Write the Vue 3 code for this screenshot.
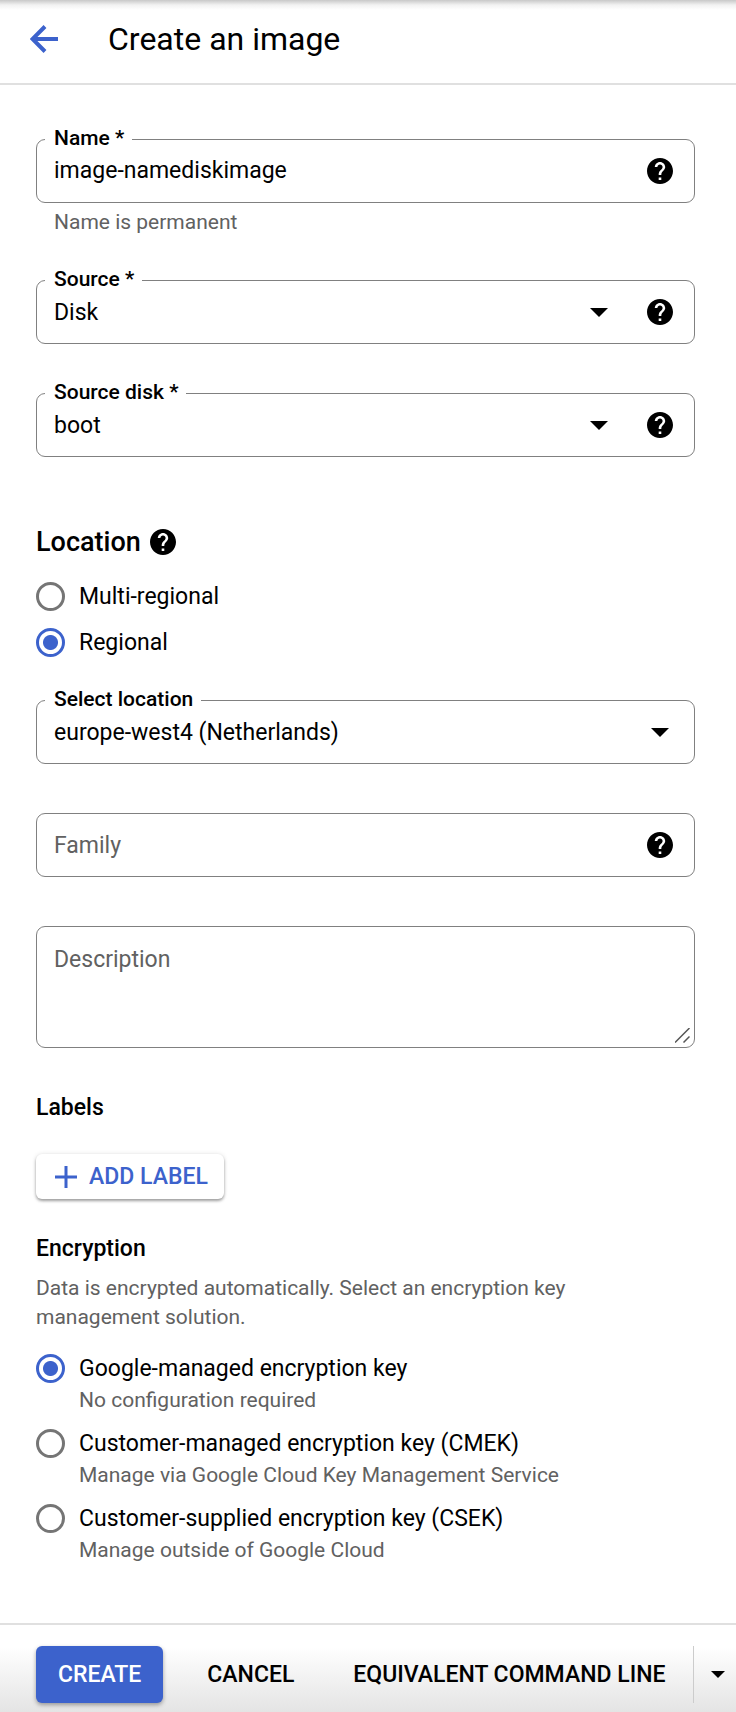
<script setup>
import { ref } from 'vue'

const name = ref('image-namediskimage')
const source = ref('Disk')
const sourceDisk = ref('boot')
const scope = ref('regional')
const location = ref('europe-west4 (Netherlands)')
const family = ref('')
const description = ref('')
const encryption = ref('google')

const scopes = [
  { id: 'multi', title: 'Multi-regional' },
  { id: 'regional', title: 'Regional' },
]
const keys = [
  { id: 'google', title: 'Google-managed encryption key', note: 'No configuration required' },
  { id: 'cmek', title: 'Customer-managed encryption key (CMEK)', note: 'Manage via Google Cloud Key Management Service' },
  { id: 'csek', title: 'Customer-supplied encryption key (CSEK)', note: 'Manage outside of Google Cloud' },
]
const helpPath =
  'M12 2C6.48 2 2 6.48 2 12s4.48 10 10 10 10-4.48 10-10S17.52 2 12 2zm1 17h-2v-2h2v2zm2.07-7.75l-.9.92C13.45 12.9 13 13.5 13 15h-2v-.5c0-1.1.45-2.1 1.17-2.83l1.24-1.26c.37-.36.59-.86.59-1.41 0-1.1-.9-2-2-2s-2 .9-2 2H8c0-2.21 1.79-4 4-4s4 1.79 4 4c0 .88-.36 1.68-.93 2.25z'
</script>

<template>
  <div class="page">
    <header class="top">
      <button class="icon-btn" type="button" aria-label="Back">
        <svg class="back" viewBox="0 0 28 28"><path d="M28 14H2.5M15 1.5L2.500 14L15 26.500" /></svg>
      </button>
      <h1>Create an image</h1>
    </header>

    <form class="form" @submit.prevent>
      <fieldset class="field">
        <legend><label for="name">Name *</label></legend>
        <div class="row">
          <input id="name" v-model="name" class="control" type="text" />
          <button class="icon-btn" type="button" aria-label="Help: name">
            <svg class="help" viewBox="2 2 20 20"><path :d="helpPath" /></svg>
          </button>
        </div>
      </fieldset>
      <p class="hint">Name is permanent</p>

      <fieldset class="field after-hint">
        <legend><label for="source">Source *</label></legend>
        <div class="row">
          <div class="picker">
            <select id="source" v-model="source" class="control"><option>Disk</option></select>
            <svg class="caret" viewBox="0 0 18 9"><path d="M0 0h18L9 9z" /></svg>
          </div>
          <button class="icon-btn" type="button" aria-label="Help: source">
            <svg class="help" viewBox="2 2 20 20"><path :d="helpPath" /></svg>
          </button>
        </div>
      </fieldset>

      <fieldset class="field after-field">
        <legend><label for="disk">Source disk *</label></legend>
        <div class="row">
          <div class="picker">
            <select id="disk" v-model="sourceDisk" class="control"><option>boot</option></select>
            <svg class="caret" viewBox="0 0 18 9"><path d="M0 0h18L9 9z" /></svg>
          </div>
          <button class="icon-btn" type="button" aria-label="Help: source disk">
            <svg class="help" viewBox="2 2 20 20"><path :d="helpPath" /></svg>
          </button>
        </div>
      </fieldset>

      <div class="location-head">
        <h2 id="location-title">Location</h2>
        <button class="icon-btn" type="button" aria-label="Help: location">
          <svg class="help" viewBox="2 2 20 20"><path :d="helpPath" /></svg>
        </button>
      </div>
      <div class="scopes" role="radiogroup" aria-labelledby="location-title">
        <label v-for="s in scopes" :key="s.id" class="scope">
          <input v-model="scope" class="radio" type="radio" name="scope" :value="s.id" />
          <span class="scope-title">{{ s.title }}</span>
        </label>
      </div>

      <fieldset class="field after-scopes">
        <legend><label for="location">Select location</label></legend>
        <div class="row">
          <div class="picker wide">
            <select id="location" v-model="location" class="control">
              <option>europe-west4 (Netherlands)</option>
            </select>
            <svg class="caret" viewBox="0 0 18 9"><path d="M0 0h18L9 9z" /></svg>
          </div>
        </div>
      </fieldset>

      <div class="box">
        <input v-model="family" class="control" type="text" placeholder="Family" aria-label="Family" />
        <button class="icon-btn" type="button" aria-label="Help: family">
          <svg class="help" viewBox="2 2 20 20"><path :d="helpPath" /></svg>
        </button>
      </div>

      <div class="box area">
        <textarea v-model="description" class="control" placeholder="Description" aria-label="Description"></textarea>
        <svg class="grip" viewBox="0 0 15 15"><path d="M0 14.500L14.500 0M8.500 14.500L14.500 8.500" /></svg>
      </div>

      <h3 class="labels-title">Labels</h3>
      <button class="add" type="button">
        <svg class="plus" viewBox="0 0 22 22"><path d="M11 0v22M0 11h22" /></svg>
        <span>ADD LABEL</span>
      </button>

      <h3 id="encryption-title" class="encryption-title">Encryption</h3>
      <p class="intro">Data is encrypted automatically. Select an encryption key management solution.</p>
      <div class="keys" role="radiogroup" aria-labelledby="encryption-title">
        <label v-for="k in keys" :key="k.id" class="key">
          <input v-model="encryption" class="radio" type="radio" name="encryption" :value="k.id" />
          <span class="key-text">
            <span class="key-title">{{ k.title }}</span>
            <span class="key-note">{{ k.note }}</span>
          </span>
        </label>
      </div>
    </form>

    <footer class="actions">
      <button class="create" type="button">CREATE</button>
      <button class="plain" type="button">CANCEL</button>
      <button class="plain" type="button">EQUIVALENT COMMAND LINE</button>
      <button class="more" type="button" aria-label="More formats">
        <svg class="caret-small" viewBox="0 0 14 7"><path d="M0 0h14L7 7z" /></svg>
      </button>
    </footer>
  </div>
</template>

<style>
body {
  background: #fff;
}
</style>

<style scoped>
.page {
  font-family: Roboto, "Liberation Sans", sans-serif;
  font-size: 23px;
  line-height: 30px;
  color: #000;
}
.page *,
.page {
  box-sizing: border-box;
}
h1,
h2,
h3,
p {
  margin: 0;
  font-weight: 500;
}
button,
input,
select,
textarea {
  font: inherit;
  color: inherit;
  margin: 0;
  padding: 0;
  border: 0;
  background: none;
}
svg {
  display: block;
  flex: none;
}
.icon-btn {
  flex: none;
}
.top {
  display: flex;
  align-items: center;
  gap: 50px;
  height: 85px;
  padding: 0 30px 6px;
  border-bottom: 2px solid #e0e0e0;
  background: linear-gradient(#c8c8c8, #f2f2f2 5px, #fff 10px);
}
.back {
  width: 28px;
  height: 28px;
  fill: none;
  stroke: #3c62cc;
  stroke-width: 4;
}
h1 {
  font-size: 32px;
  line-height: 40px;
  font-weight: 400;
}
.form {
  padding: 41px 41px 56px 36px;
}
.field {
  min-width: 0;
  margin: 0;
  padding: 0 8px 12px;
  border: 1px solid #808080;
  border-radius: 9px;
}
legend {
  padding: 0 8px 2px 9px;
  font-size: 21px;
  line-height: 24px;
  font-weight: 500;
}
legend label {
  display: block;
}
.row {
  display: flex;
  align-items: center;
  height: 38px;
  padding: 0 13px 0 9px;
}
.control {
  flex: 1;
  min-width: 0;
  width: 100%;
  height: 30px;
  outline: none;
  appearance: none;
}
select.control {
  padding-top: 1px;
}
.box .control {
  padding-top: 2px;
}
.picker {
  position: relative;
  flex: 1;
  display: flex;
  align-items: center;
  margin-right: 39px;
}
.picker.wide {
  margin-right: 4px;
}
.caret {
  position: absolute;
  right: 0;
  width: 18px;
  height: 9px;
  pointer-events: none;
}
.help {
  width: 26px;
  height: 26px;
}
.hint {
  margin: 5px 0 0 18px;
  font-size: 21px;
  line-height: 28px;
  font-weight: 400;
  color: #616161;
}
.after-hint {
  margin-top: 31px;
}
.after-field {
  margin-top: 36px;
}
.location-head {
  display: flex;
  align-items: center;
  gap: 9px;
  margin-top: 69px;
}
h2 {
  font-size: 27px;
  line-height: 32px;
}
.scopes {
  margin-top: 15px;
}
.scope {
  display: flex;
  align-items: center;
  gap: 14px;
  height: 46px;
}
.scope-title {
  padding-top: 2px;
}
.radio {
  flex: none;
  width: 29px;
  height: 29px;
  border: 3px solid #757575;
  border-radius: 50%;
  appearance: none;
}
.radio:checked {
  border-color: #3c62cc;
  background: radial-gradient(circle, #3c62cc 7px, transparent 8px);
}
.after-scopes {
  margin-top: 22px;
}
.box {
  position: relative;
  display: flex;
  align-items: center;
  height: 64px;
  margin-top: 49px;
  padding: 0 21px 0 17px;
  border: 1px solid #808080;
  border-radius: 9px;
}
.control::placeholder {
  color: #616161;
  opacity: 1;
}
.area {
  height: 122px;
  padding: 16px 17px;
}
.area .control {
  height: 100%;
  resize: none;
}
.grip {
  position: absolute;
  right: 4px;
  bottom: 4px;
  width: 15px;
  height: 15px;
  fill: none;
  stroke: #555;
  stroke-width: 1.500;
}
h3 {
  font-size: 23px;
  line-height: 28px;
}
.labels-title {
  margin-top: 46px;
}
.add {
  display: flex;
  align-items: center;
  gap: 12px;
  height: 45px;
  margin-top: 32px;
  padding: 0 16px 0 19px;
  border-radius: 6px;
  background: #fff;
  color: #3c62cc;
  font-weight: 500;
  box-shadow: 0 2px 3px rgba(0, 0, 0, 0.35), 0 0 5px rgba(0, 0, 0, 0.1);
}
.plus {
  width: 22px;
  height: 22px;
  fill: none;
  stroke: #3c62cc;
  stroke-width: 3;
}
.encryption-title {
  margin-top: 36px;
}
.intro {
  max-width: 600px;
  margin-top: 11px;
  font-size: 21px;
  line-height: 29px;
  font-weight: 400;
  color: #616161;
}
.keys {
  display: flex;
  flex-direction: column;
  gap: 12px;
  margin-top: 22px;
}
.key {
  display: flex;
  align-items: flex-start;
  gap: 14px;
}
.key-text {
  display: flex;
  flex-direction: column;
}
.key-note {
  font-size: 21px;
  line-height: 33px;
  color: #616161;
}
.actions {
  display: flex;
  align-items: center;
  height: 89px;
  padding: 12px 0 0 36px;
  border-top: 2px solid #e0e0e0;
  background: linear-gradient(#fff 25%, #e4e4e4);
  font-weight: 500;
  white-space: nowrap;
}
.create {
  height: 57px;
  padding: 0 22px;
  border-radius: 6px;
  background: #3c62cc;
  color: #fff;
  box-shadow: 0 2px 4px rgba(0, 0, 0, 0.35);
}
.plain {
  height: 57px;
  margin-left: 44px;
}
.plain + .plain {
  margin-left: 59px;
}
.more {
  display: flex;
  align-items: center;
  justify-content: flex-start;
  width: 43px;
  height: 57px;
  margin-left: auto;
  padding-left: 17px;
  border-left: 1px solid #ccc;
}
.caret-small {
  width: 14px;
  height: 7px;
}
</style>
